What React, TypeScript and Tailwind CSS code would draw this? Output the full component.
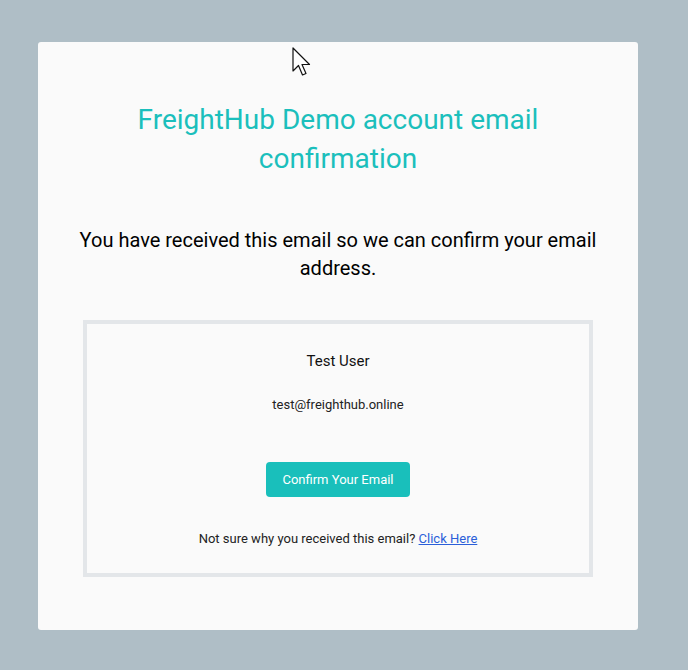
export default function App() {
  return (
    <div className="relative min-h-[670px] w-full bg-[#afbec6] pt-[42px] font-['Roboto',sans-serif]">
      <div className="ml-[38px] w-[600px] rounded-[3px] bg-[#fafafa] pt-[58px] pb-[53px]">
        <h1 className="px-[45px] text-center text-[28px] leading-[39px] font-normal text-[#1bbfbc]">
          FreightHub Demo account email confirmation
        </h1>

        <p className="mx-[20px] mt-[48px] text-center text-[20px] leading-[28px] text-black">
          You have received this email so we can confirm your email address.
        </p>

        <div className="mx-[45px] mt-[38px] border-4 border-[#e3e6e9] px-4 pt-[25px] pb-[24px] text-center">
          <div className="text-[15px] leading-[24px] text-[#111]">Test User</div>
          <div className="mt-[22px] text-[13px] leading-[20px] text-[#222]">
            test@freighthub.online
          </div>
          <div className="mt-[47px] flex justify-center">
            <button className="h-[35px] w-[144px] rounded-[4px] bg-[#19bfbb] text-[13px] font-normal text-white">
              Confirm Your Email
            </button>
          </div>
          <div className="mt-[32px] text-[13px] leading-[20px] text-[#222]">
            Not sure why you received this email?{" "}
            <a href="#" className="text-[#2b5fd9] underline">
              Click Here
            </a>
          </div>
        </div>
      </div>

      {/* mouse pointer captured in the screenshot */}
      <svg
        className="absolute left-[292px] top-[47px]"
        width="22"
        height="32"
        viewBox="0 0 22 32"
      >
        <path
          d="M1 1 L1 24 L6.5 18.5 L10.5 28 L14 26.5 L10 17.5 L17.5 17.5 Z"
          fill="#fff"
          stroke="#111"
          strokeWidth="1.2"
          strokeLinejoin="round"
        />
      </svg>
    </div>
  );
}
